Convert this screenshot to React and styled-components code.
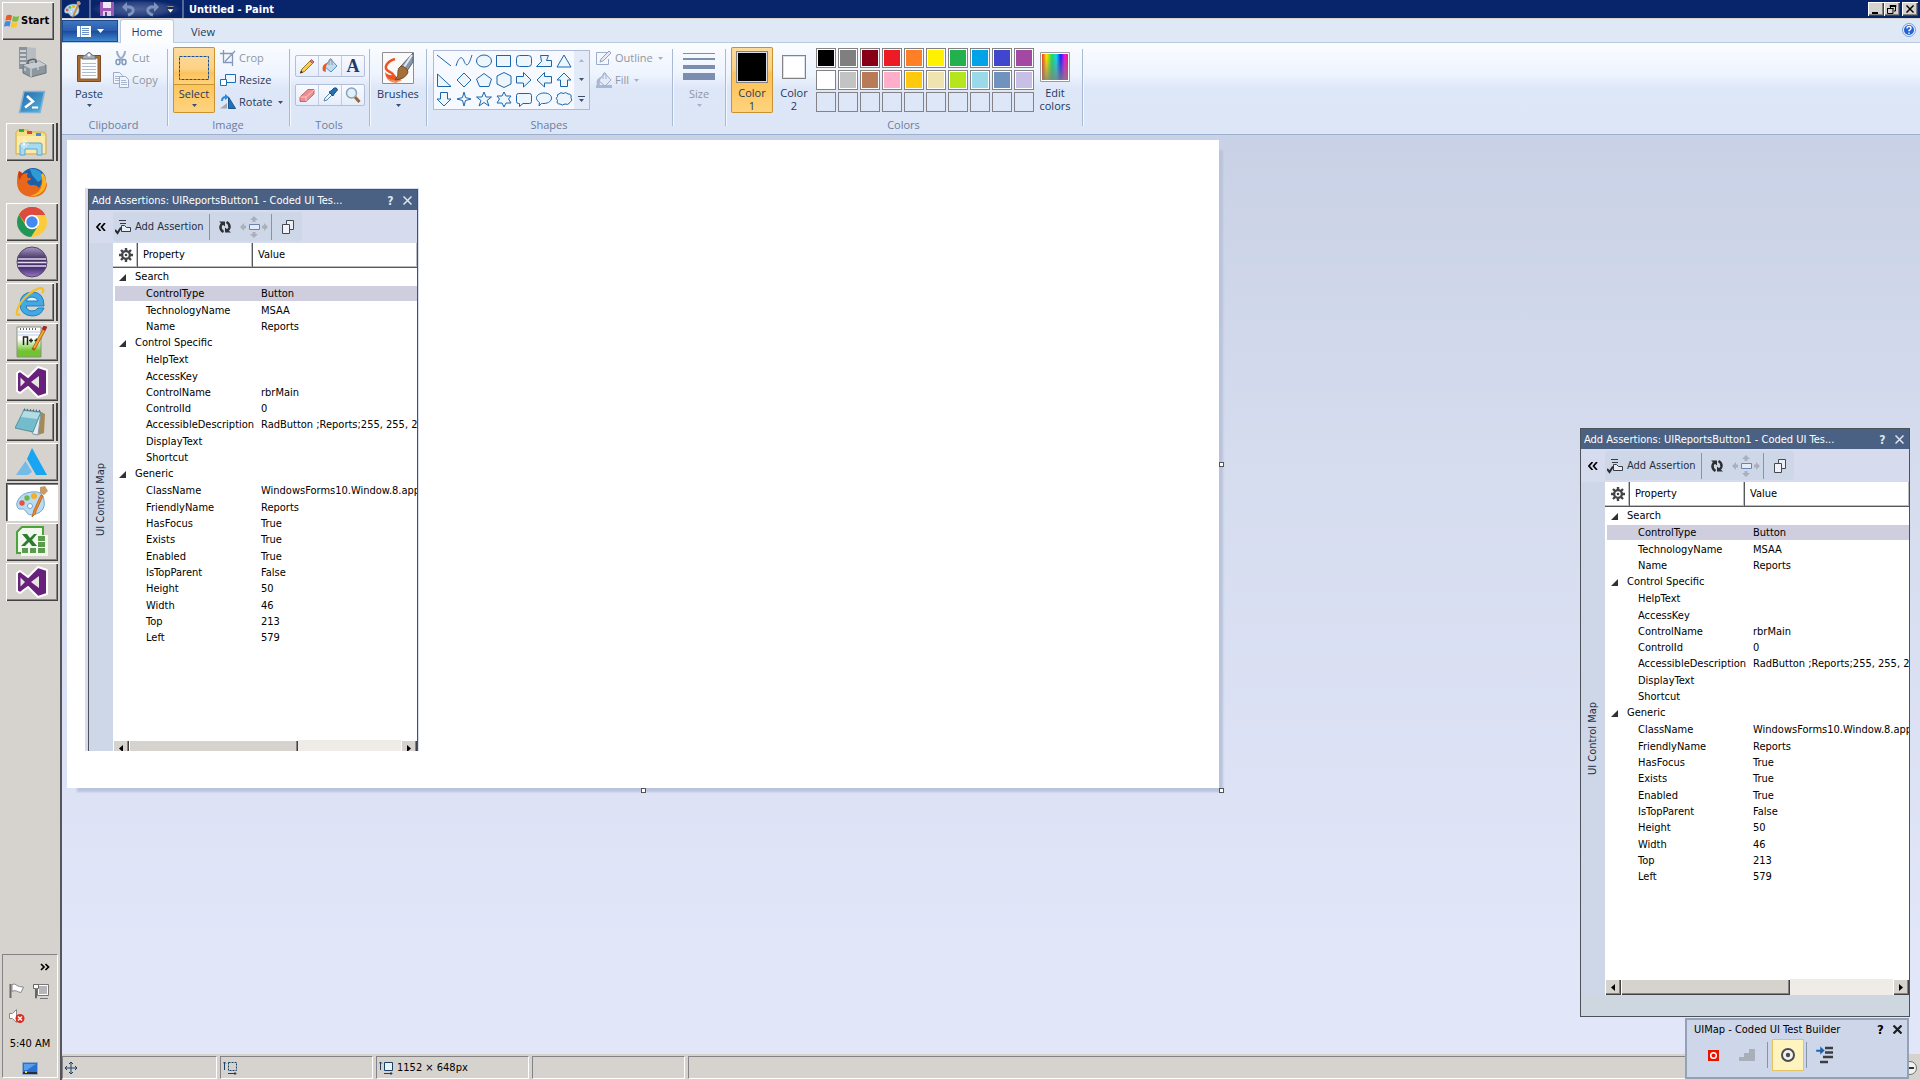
import React from "react";
import styled, { createGlobalStyle } from "styled-components";

const swatches = [
    "#000000", "#7f7f7f", "#880015", "#ed1c24", "#ff7f27", "#fff200", "#22b14c", "#00a2e8", "#3f48cc", "#a349a4",
    "#ffffff", "#c3c3c3", "#b97a57", "#ffaec9", "#ffc90e", "#efe4b0", "#b5e61d", "#99d9ea", "#7092be", "#c8bfe7",
    "", "", "", "", "", "", "", "", "", "",
];

const shapes = [
    ["Line", "M3 4L17 15"],
    ["Curve", "M2 15C5 5 8 5 10 10S14 17 18 4"],
    ["Oval", "M2.5 10a7.5 6 0 1 0 15 0a7.5 6 0 1 0 -15 0z"],
    ["Rectangle", "M2.5 4.5h14v11h-14z"],
    ["Rounded rectangle", "M5.500 4.500h9q3 0 3 3v5q0 3 -3 3h-9q-3 0 -3 -3v-5q0 -3 3 -3z"],
    ["Polygon", "M6.500 4.500h8l-2 5h5v6h-15l5 -5z"],
    ["Triangle", "M10 4L17 16H3z"],
    ["Right triangle", "M3.500 4L17 16.500H3.500z"],
    ["Diamond", "M10 3L17 10L10 17L3 10z"],
    ["Pentagon", "M10 3.500L17.500 9L15 16.500H5.500L2.500 9z"],
    ["Hexagon", "M10 2.500L17 6V14L10 17.500L3 14V6z"],
    ["Right arrow", "M2.500 6.500h7v-4L17 10L9.500 17v-4h-7z"],
    ["Left arrow", "M17.500 6.500h-7v-4L3 10L10.500 17v-4h7z"],
    ["Up arrow", "M10 3L17 10h-3.500v6.500h-7V10H3z"],
    ["Down arrow", "M6.500 3.500h7V10H17L10 17L3 10h3.500z"],
    ["Four-point star", "M10 3L11.500 8.500L17 10L11.500 11.500L10 17L8.500 11.500L3 10L8.500 8.500z"],
    ["Five-point star", "M10 3L12 8H17.500L13 11.500L15 17L10 13.500L5 17L7 11.500L2.500 8H8z"],
    ["Six-point star", "M10 3L12 7H17L14.500 10L17 14H12L10 18L8 14H3L5.500 10L3 7H8z"],
    ["Rounded callout", "M4.500 4.500h11q2 0 2 2v6q0 2 -2 2H9L5.500 17.500V14.500H4.500q-2 0 -2 -2v-6q0 -2 2 -2z"],
    ["Oval callout", "M5 17L5.500 13.500C-1 9 4 4 10 4C20 4 20 14 10 14.500Q8 14.500 7.500 14.500z"],
    ["Cloud callout", "M5 5Q7 2.500 9 4.500Q12 2.500 14 5Q18 5 17 8.500Q19 11.500 16 13.500Q14 16.500 11 15Q8 17 6 15Q2 15 3.500 11.500Q1 9 3.500 7.500Q3 5 5 5z"],
];

const properties = [
    { group: "Search", tall: true },
    { name: "ControlType", value: "Button", tall: true, selected: true },
    { name: "TechnologyName", value: "MSAA" },
    { name: "Name", value: "Reports" },
    { group: "Control Specific", tall: true },
    { name: "HelpText", tall: true },
    { name: "AccessKey" },
    { name: "ControlName", value: "rbrMain" },
    { name: "ControlId", value: "0" },
    { name: "AccessibleDescription", value: "RadButton ;Reports;255, 255, 2", tall: true },
    { name: "DisplayText" },
    { name: "Shortcut" },
    { group: "Generic", tall: true },
    { name: "ClassName", value: "WindowsForms10.Window.8.app", tall: true },
    { name: "FriendlyName", value: "Reports" },
    { name: "HasFocus", value: "True" },
    { name: "Exists", value: "True", tall: true },
    { name: "Enabled", value: "True" },
    { name: "IsTopParent", value: "False" },
    { name: "Height", value: "50", tall: true },
    { name: "Width", value: "46" },
    { name: "Top", value: "213" },
    { name: "Left", value: "579" },
];

/* ---------- drawings ---------- */

const Svg = ({ size = 16, w, h, box, children }) => (
    <svg width={w || size} height={h || size} viewBox={box || `0 0 ${w || size} ${h || size}`} fill="none" aria-hidden="true">
        {children}
    </svg>
);

const Caret = ({ color = "#3b4f6e" }) => (
    <Svg w={5} h={3}><path d="M0 0H5L2.500 3z" fill={color} /></Svg>
);

const WindowsLogo = () => (
    <Svg size={16}>
        <path d="M2.500 2.500Q5 1 8 2.500L7 7.500Q4 6.500 1.300 7.800z" fill="#e8592b" />
        <path d="M9 3Q12 4.500 15.300 3L14 8Q11 9.500 8 8z" fill="#7dbb42" />
        <path d="M1 8.800Q4 7.500 6.700 8.600L5.500 13.500Q3 12.300 0 13.800z" fill="#3b8ee0" />
        <path d="M7.700 9Q10.500 10.500 13.700 9L12.500 14Q9.500 15.600 6.500 14z" fill="#fbc62e" />
    </Svg>
);

const ServerIcon = () => (
    <Svg size={32}>
        <path d="M3 1h8v22H3z" fill="#8b9299" />
        <path d="M11 1l9 1v22h-9z" fill="#b7bdc2" />
        <path d="M4 5h6M4 9h6M4 13h6M4 17h6" stroke="#dfe5e8" strokeWidth="1.500" />
        <path d="M7 19L23 15L30 19V27L15 31L7 27z" fill="#8c979e" stroke="#69737a" />
        <path d="M7 19L23 15L30 19L15 23z" fill="#c6ced3" />
        <path d="M12 18v-3q5 -3 8 -1v3" stroke="#596269" strokeWidth="1.500" />
        <path d="M15 23v8M9 22v3M22 21v3" stroke="#e3e8eb" />
    </Svg>
);

const PowerShellIcon = () => (
    <Svg size={32}>
        <defs><linearGradient id="ps" x1="0" y1="0" x2="1" y2="1"><stop stopColor="#2567a9" /><stop offset="1" stopColor="#57b4dc" /></linearGradient></defs>
        <path d="M8 5.500H28.500L24 26.500H3.500z" fill="url(#ps)" stroke="#7fb4da" strokeWidth="1.500" strokeLinejoin="round" />
        <path d="M11 10L17 15.500L9 21.500" stroke="#fff" strokeWidth="2.500" />
        <path d="M16 21.500h6" stroke="#fff" strokeWidth="2" />
    </Svg>
);

const FolderIcon = () => (
    <Svg size={32}>
        <path d="M1 6L3 4h10l2 2h14l2 3v19H1z" fill="#f7dc83" stroke="#d2ae4c" />
        <path d="M4 3h5v3H4z" fill="#28b53c" /><path d="M12 5h5v3h-5z" fill="#d64a35" /><path d="M21 7h5v3h-5z" fill="#3d92d6" />
        <path d="M2 10h28v17H2z" fill="#fbeaa8" />
        <path d="M5 29V19q0 -2 2 -2h18q2 0 2 2v10h-5v-6H10v6z" fill="#a6daf0" stroke="#5ca6cc" />
        <path d="M9 13v10M4 18h10M6 15l6 6M12 15l-6 6" stroke="#fff" opacity=".7" />
    </Svg>
);

const FirefoxIcon = () => (
    <Svg size={32}>
        <circle cx="17" cy="15" r="13" fill="#1c5fa8" />
        <path d="M14 3Q25 2 28 12L22 16L16 9z" fill="#2f9bd4" />
        <path d="M3 5L7 8Q9 7 12 7Q10 10 12 12L15 12L14 14L11 15Q12 20 17 19Q21 19 23 22Q27 17 25 11Q31 15 31 19Q29 31 16 31Q2 30 1 17Q1 9 3 5z" fill="#e8671b" />
        <path d="M27 7Q33 16 28 24Q22 31 14 30Q25 27 26 18Q27 13 25 9z" fill="#f8b323" />
        <path d="M3 5Q1 11 4 14Q5 9 8 8z" fill="#c23b15" />
    </Svg>
);

const ChromeIcon = () => (
    <Svg size={32}>
        <circle cx="16" cy="16" r="15" fill="#fccb3c" />
        <path d="M3 8.500A15 15 0 0 1 29 8.500H16z" fill="#dd4b3e" />
        <path d="M3 8.500A15 15 0 0 0 15 31L22 20L10 20z" fill="#219657" />
        <path d="M3 8.500Q8 1 16 1Q25 1 29 9H16Q10 10 9 17z" fill="#dd4b3e" />
        <circle cx="16" cy="16" r="7.300" fill="#fff" />
        <circle cx="16" cy="16" r="5.700" fill="#4688f1" />
    </Svg>
);

const EclipseIcon = () => (
    <Svg size={32}>
        <defs><linearGradient id="ecl" x1="0" y1="0" x2="0" y2="1"><stop stopColor="#a89bc6" /><stop offset=".4" stopColor="#443060" /><stop offset=".7" stopColor="#4a3175" /><stop offset="1" stopColor="#9a77c6" /></linearGradient></defs>
        <circle cx="16" cy="16" r="15" fill="url(#ecl)" stroke="#574573" />
        <path d="M2 13h28M1.500 16.500h29M2 20h28" stroke="#e4dcf0" strokeWidth="1.500" />
    </Svg>
);

const IeIcon = () => (
    <Svg size={32}>
        <path d="M29 20H11q1 5 6 5q4 0 6 -3h6Q26 30 17 30Q5 29 5 18Q5 7 17 6Q29 6 29 20z" fill="#42a9e2" stroke="#1e7fbe" />
        <path d="M11 15h12q-1 -4 -6 -4t-6 4z" fill="#e1f1fa" stroke="#1e7fbe" />
        <path d="M5 28Q1 31 2 25Q4 16 14 8Q25 0 28 3Q29 5 27 7" stroke="#f5bd27" strokeWidth="2.200" />
    </Svg>
);

const NotepadPlusIcon = () => (
    <Svg size={32}>
        <defs><linearGradient id="npp" x1="0" y1="0" x2="0" y2="1"><stop offset=".4" stopColor="#fff" /><stop offset=".8" stopColor="#6fc530" /></linearGradient></defs>
        <path d="M1 1h24v30H1z" fill="url(#npp)" stroke="#8a8f7f" />
        <path d="M4 3h18" stroke="#666" strokeDasharray="1 2" strokeWidth="2" /><path d="M2 6h22M2 9h22" stroke="#b7cde4" />
        <path d="M7.500 19v-8h4v8M13 14.500h4M15 12.500v4M18.500 14.500h4M20.500 12.500v4" stroke="#1b2716" strokeWidth="1.500" />
        <path d="M28 4L17 24" stroke="#a25b12" strokeWidth="3.500" /><path d="M28 4L18 22" stroke="#f2a82c" strokeWidth="2" />
        <path d="M29.500 0L27.500 4" stroke="#a02a2a" strokeWidth="4" />
    </Svg>
);

const VisualStudioIcon = () => (
    <Svg size={32}>
        <path d="M22 1L31 4V28L22 31L12 21L4 27L1 25V7L4 5L12 11z" fill="#68217a" stroke="#fff" strokeWidth="2" strokeLinejoin="round" />
        <path d="M23 10V22L15 16zM4.500 11.500V20.500L9 16z" fill="#e8e6e3" />
    </Svg>
);

const NotepadIcon = () => (
    <Svg size={32}>
        <path d="M26 6L30 8L29 27L23 29z" fill="#a78857" />
        <path d="M8 4L26 6L23 29L18 28z" fill="#e2edf1" stroke="#8098a4" />
        <path d="M9 4L26 6L18 26L0 22z" fill="#73bccb" stroke="#568f9e" />
        <path d="M9 5L25 7L22 13L6 11z" fill="#b5dce3" />
        <path d="M9 3.500L26 5" stroke="#56666d" strokeWidth="2" strokeDasharray="1 2" />
    </Svg>
);

const AzureIcon = () => (
    <Svg size={32}>
        <path d="M16 2L31 29H20L11 13z" fill="#1aa5f2" />
        <path d="M9.500 15L16 26L12 29H0z" fill="#75bbe8" />
    </Svg>
);

const PaletteIcon = ({ size = 32 }) => (
    <Svg size={size} box="0 0 32 32">
        <path d="M15 6Q27 4 28 14Q30 25 20 28Q12 31 10 25Q8 22 3 23Q-1 20 2 14Q6 7 15 6z" fill="#b9dcf2" stroke="#6fa7cf" />
        <circle cx="14" cy="20" r="2.500" fill="#fff" stroke="#6fa7cf" />
        <circle cx="6" cy="17" r="2.700" fill="#e25349" /><circle cx="11" cy="12" r="2.700" fill="#6bb84a" /><circle cx="18" cy="10" r="3" fill="#f5ac2b" />
        <path d="M25 9L18 24L16 31Q21 27 20 25L27 10z" fill="#e48b34" stroke="#c76c25" />
        <path d="M24 1L29 0L32 5L28 9L24 7z" fill="#c89b6b" />
    </Svg>
);

const ExcelIcon = () => (
    <Svg size={32}>
        <path d="M6 1H27V27H1V6z" fill="#f3f8ef" stroke="#49a43a" strokeWidth="2" />
        <path d="M21 9h11v21H5v-9h16z" fill="#f3f8ef" />
        <path d="M22 10h7v5h-7zM22 16h7v5h-7zM6 22h6v5H6zM14 22h6v5h-6zM22 22h7v5h-7z" fill="#5a9b4c" />
        <path d="M6 8h5l3 4l4 -4h3l-5 6l5 6h-5l-3 -4l-4 4H5l6 -6z" fill="#2c7b2f" />
    </Svg>
);

const FlagIcon = () => (
    <Svg size={16}><path d="M1.500 1v14" stroke="#6b6b6b" strokeWidth="2" /><path d="M3 1.500Q6 0 8 2.500Q10 4 14.500 4L12 9.500Q9 9 7.500 8Q5 7 3 8.500z" fill="#fff" stroke="#8a8a8a" /></Svg>
);

const NetworkIcon = () => (
    <Svg size={16}><path d="M5 2h10v10H5z" fill="#b7b5b8" /><path d="M5.500 2.500h9v9h-9z" stroke="#fff" /><path d="M4.500 1.500h11v11h-11zM7 15.500h8" stroke="#777" /><path d="M.5 1.500h5v4h-2v9.500h-1V5.500h-2z" fill="#fff" stroke="#666" /></Svg>
);

const SpeakerIcon = () => (
    <Svg size={16}><path d="M.5 5.500h3l4 -4v13l-4 -4h-3z" fill="#fff" stroke="#888" /><circle cx="11" cy="10.500" r="4.500" fill="#db2c1d" /><path d="M9 8.500l4 4M13 8.500l-4 4" stroke="#fff" strokeWidth="1.500" /></Svg>
);

const DesktopIcon = () => (
    <Svg w={16} h={13}><path d="M.5 .5h15v12H.5z" fill="#2a70cf" stroke="#8ba8c8" /><path d="M2 2h12L5 8H2z" fill="#5c9cec" /><path d="M1 10h14v2H1z" fill="#262b35" /><path d="M3 9h2v2H3z" fill="#f8ca3a" /></Svg>
);

const SaveIcon = () => (
    <Svg size={14}><path d="M0 0h14v14H0z" fill="#9b5ab5" /><path d="M3 0h8v6H3z" fill="#f1eaf4" /><path d="M3 9h8v5H3z" fill="#ddd0e5" /><path d="M5 10h2v4H5z" fill="#6d3b87" /></Svg>
);

const UndoIcon = ({ flip }) => (
    <Svg size={16}><g transform={flip ? "translate(16 0) scale(-1 1)" : undefined}><path d="M4 6H9Q13 7 12 10.500Q11 13 7 14" stroke="#7e94bf" strokeWidth="3" /><path d="M1 6L6 1V11z" fill="#7e94bf" /></g></Svg>
);

const PasteIcon = () => (
    <Svg w={26} h={31}>
        <path d="M1.500 3.500h23v26h-23z" fill="#ad6b2e" stroke="#7e4a1e" strokeLinejoin="round" />
        <path d="M4 6h18v21H4z" fill="#fbfdff" stroke="#8b5a31" />
        <path d="M6 11.500h14M6 14.500h14M6 17.500h14M6 20.500h14M6 23.500h14" stroke="#aebbd0" />
        <path d="M6 7q0 -4 4 -4q3 -5 6 0q4 0 4 4z" fill="#a4adb8" stroke="#69717c" /><circle cx="13" cy="3" r="1.500" fill="#fff" />
    </Svg>
);

const CutIcon = () => (
    <Svg><path d="M4 1Q4 6 9.500 10M12 1Q12 6 6.500 10" stroke="#9baecb" strokeWidth="2" /><ellipse cx="5" cy="12" rx="2" ry="2.600" stroke="#8197bb" strokeWidth="1.500" /><ellipse cx="11" cy="12" rx="2" ry="2.600" stroke="#8197bb" strokeWidth="1.500" /></Svg>
);

const CopyIcon = () => (
    <Svg><path d="M.5 .5h6l3 3v8h-9z" fill="#f0f4fc" stroke="#9bacc9" /><path d="M2 4.500h5M2 6.500h5M2 8.500h5" stroke="#a8b8d2" /><path d="M6.500 4.500h6l3 3v8h-9z" fill="#f0f4fc" stroke="#9bacc9" /><path d="M8 8.500h5M8 10.500h6M8 12.500h6" stroke="#a8b8d2" /></Svg>
);

const SelectIcon = () => (
    <Svg size={32}><path d="M1.500 4.500h29v23h-29z" stroke="#12509c" strokeDasharray="3 1" /></Svg>
);

const CropIcon = () => (
    <Svg><path d="M3.500 0v12.500H12M0 3.500h12.500V16M5 11.500L15 1" stroke="#8597b8" strokeWidth="1.300" /></Svg>
);

const ResizeIcon = () => (
    <Svg><path d="M5.500 2.500h10v8h-10z" fill="#eef6ff" stroke="#1f6db3" /><path d="M.5 7.500h6v6h-6z" fill="#fff" stroke="#1f6db3" /></Svg>
);

const RotateIcon = () => (
    <Svg><path d="M8.500 3L15.500 14.500H8.500z" fill="#2471b5" stroke="#17568f" /><path d="M7 9v5.500H0z" fill="#a3a8b3" /><path d="M2 7Q2 3 6 3" stroke="#2f8add" strokeWidth="2" /><path d="M5 0l4 3l-4 3z" fill="#2f8add" /></Svg>
);

const PencilIcon = () => (
    <Svg><path d="M1.500 15L3 11L11 3L13.500 5.500L5.500 13.500z" fill="#f6cd4c" stroke="#9b7431" /><path d="M11 3L12.500 1.500L15 4L13.500 5.500z" fill="#e27d86" stroke="#9b5a5e" /><path d="M1 15.500L2 12.500L4 14.500z" fill="#333" /></Svg>
);

const BucketIcon = ({ muted }) => (
    <Svg>
        {muted && <path d="M0 13h16v3H0z" fill="#a9b8d2" />}
        <path d="M3 7L9 1.500L15 8L9 14L3 9z" fill={muted ? "#e6ecf7" : "#bedcf1"} stroke={muted ? "#9badca" : "#5b90bc"} />
        <path d="M7 7V2q2 -3 3 0v5" stroke={muted ? "#9badca" : "#868f99"} />
        <path d="M1 13Q-1 6 6 5Q3 8 4 14z" fill={muted ? "#a9b8d2" : "#ea5a25"} />
    </Svg>
);

const EraserIcon = () => (
    <Svg><path d="M1 10L9 2.500H15L15 7L7 14.500H1z" fill="#ec8f92" stroke="#c56469" /><path d="M1 10H7L15 3" stroke="#fac7c8" /><path d="M7 10v4" stroke="#fac7c8" /></Svg>
);

const PickerIcon = () => (
    <Svg><path d="M2 14L3 11L8 6L10 8L5 13z" fill="#eef6fd" stroke="#5b84ad" /><path d="M7 5L9 4L12 1Q15 0 15.500 3L12 7L11 9z" fill="#2470b5" stroke="#174f86" /></Svg>
);

const LensIcon = () => (
    <Svg><path d="M10 10L14.500 15" stroke="#99643a" strokeWidth="3" /><circle cx="6.500" cy="6" r="5" fill="#dff1fc" stroke="#8aa0b6" strokeWidth="1.500" /></Svg>
);

const BrushIcon = () => (
    <Svg size={32}>
        <path d="M.5 .5h31v31H.5z" fill="#fafafa" stroke="#8f8f8f" />
        <path d="M13 7Q6 9 4 14Q3 18 8 20Q12 22 13 27" stroke="#ee5422" strokeWidth="2.500" />
        <path d="M3 20Q6 24 13 23Q15 27 20 28Q10 32 6 27Q3 24 3 20z" fill="#ee5422" />
        <path d="M4 25Q9 29 20 28L14 31Q6 30 4 25z" fill="#f88b5c" />
        <path d="M31 1V10L25 19L19 14z" fill="#8998ad" stroke="#5a6778" /><path d="M30 3L22 15" stroke="#e6edf5" strokeWidth="2" />
        <path d="M19 14Q25 15 26 20Q24 27 13 28Q17 24 16 19Q16 16 19 14z" fill="#a36f3a" stroke="#754921" />
    </Svg>
);

const OutlineIcon = () => (
    <Svg><path d="M12 2.500H.5v12h12V9" stroke="#9badca" /><path d="M4 12L5 9L13 1L15 3L7 11z" fill="#e5ebf6" stroke="#8ea2c3" /></Svg>
);

const SizeIcon = () => (
    <Svg size={32}><path d="M0 1h32v1H0zM0 6h32v2H0zM0 13h32v4H0zM0 21h32v7H0z" fill="#7c8eb0" /></Svg>
);

const SpectrumIcon = () => (
    <Svg w={30} h={30}>
        <defs>
            <linearGradient id="hue"><stop stopColor="#f23a1e" /><stop offset=".17" stopColor="#fbe500" /><stop offset=".38" stopColor="#1ed760" /><stop offset=".55" stopColor="#15d5e8" /><stop offset=".72" stopColor="#1b22f2" /><stop offset=".87" stopColor="#e518e5" /><stop offset="1" stopColor="#f01b5d" /></linearGradient>
            <linearGradient id="fade" x1="0" y1="0" x2="0" y2="1"><stop offset=".1" stopColor="#808080" stopOpacity="0" /><stop offset="1" stopColor="#808080" stopOpacity=".8" /></linearGradient>
        </defs>
        <path d="M.5 .5h29v29h-29z" fill="#fff" stroke="#9b9b9b" /><path d="M2 2h26v26h-26z" fill="url(#hue)" /><path d="M2 2h26v26h-26z" fill="url(#fade)" />
    </Svg>
);

const HelpIcon = () => (
    <Svg size={14}><circle cx="7" cy="7" r="6.500" fill="#e8f1fd" stroke="#7a9fe0" /><circle cx="7" cy="7" r="5" fill="#2460d8" /><path d="M5 5.500Q5 3.500 7 3.500T9 5.200Q9 6.500 7 7.500V8.300M7 9.500V11" stroke="#fff" strokeWidth="1.400" /></Svg>
);

const AssertIcon = () => (
    <Svg><path d="M4 1.500h7M5 4.500h6M7 7.500h3" stroke="#3a3d40" /><path d="M6.500 6.500h3l2 2h4v4h-9z" fill="#e8ecf4" stroke="#3a3d40" /><path d="M0 11l2.500 3L6 8.500" stroke="#2b2d30" strokeWidth="2" /></Svg>
);

const RefreshIcon = () => (
    <Svg size={14}><path d="M5.500 12Q2 10 2.500 6.500Q3 4 5.500 3M8.500 2Q12 4 11.500 7.500Q11 10 8.500 11" stroke="#2c2f33" strokeWidth="2.500" /><path d="M1 1.500h6v5zM13 12.500H7v-5z" fill="#2c2f33" /></Svg>
);

const NavigateIcon = () => (
    <Svg w={30} h={24}><path d="M15 1L19 5H16.500V7H13.500V5H11zM15 23L11 19H13.500V17H16.500V19H19zM1 12L5 8V10.500H7V13.500H5V16zM29 12L25 16V13.500H23V10.500H25V8z" fill="#aab0bb" /><path d="M10.500 9.500h10v5h-10z" fill="#e4ebf5" stroke="#6a83b3" /></Svg>
);

const PagesIcon = () => (
    <Svg w={14} h={16}><path d="M5.500 1.500h7v9h-7z" fill="#eaeef5" stroke="#46494e" /><path d="M1.500 5.500h7v9h-7z" fill="#f1f2f8" stroke="#46494e" /></Svg>
);

const GearIcon = () => (
    <Svg size={14}><path d="M7 0v14M0 7h14M2 2l10 10M12 2L2 12" stroke="#424447" strokeWidth="2.400" /><circle cx="7" cy="7" r="5" fill="#424447" /><circle cx="7" cy="7" r="2.700" fill="#fff" /><circle cx="7" cy="7" r="1.300" fill="#424447" /></Svg>
);

const Chevrons = ({ right }) => (
    <Svg w={10} h={8}><path d={right ? "M1 1l3 3l-3 3M5.500 1l3 3l-3 3" : "M4.500 0L1 4l3.500 4M9 0L5.500 4L9 8"} stroke="#000" strokeWidth="1.700" /></Svg>
);

const CrossIcon = ({ color, thick = 1.5, size = 9 }) => (
    <Svg size={size} box="0 0 9 9"><path d="M.5 .5l8 8M8.500 .5l-8 8" stroke={color} strokeWidth={thick} /></Svg>
);

/* ---------- property inspector ---------- */

const AssertionWindow = () => (
    <Inspector>
        <InspectorTitle>
            <span>Add Assertions: UIReportsButton1 - Coded UI Tes...</span>
            <TitleButton aria-label="Help">?</TitleButton>
            <TitleButton aria-label="Close"><CrossIcon color="#dfe5ee" /></TitleButton>
        </InspectorTitle>
        <InspectorBar>
            <Collapse aria-label="Collapse"><Chevrons /></Collapse>
            <ToolStrip>
                <ToolButton $width={93}><AssertIcon />Add Assertion</ToolButton>
                <ToolDivider $gap={1} />
                <ToolButton $width={27} aria-label="Refresh"><RefreshIcon /></ToolButton>
                <ToolButton $width={32} aria-label="Navigate"><NavigateIcon /></ToolButton>
                <ToolDivider $gap={1} />
                <ToolButton $width={29} aria-label="Copy"><PagesIcon /></ToolButton>
            </ToolStrip>
        </InspectorBar>
        <InspectorBody>
            <SideTab>UI Control Map</SideTab>
            <Sheet>
                <SheetScroll>
                    <PropertyTable>
                        <colgroup><col width="25" /><col width="115" /><col /></colgroup>
                        <thead>
                            <tr>
                                <HeadCell aria-label="Options"><GearIcon /></HeadCell>
                                <HeadCell>Property</HeadCell>
                                <HeadCell>Value</HeadCell>
                            </tr>
                        </thead>
                        <tbody>
                            {properties.map(row => row.group ? (
                                <PropertyRow key={row.group} $tall={row.tall}>
                                    <Cell colSpan={3}>
                                        <GroupLabel><Svg size={7}><path d="M7 0V7H0z" fill="#2f3133" /></Svg>{row.group}</GroupLabel>
                                    </Cell>
                                </PropertyRow>
                            ) : (
                                <PropertyRow key={row.name} $tall={row.tall}>
                                    <NameCell colSpan={2} $selected={row.selected}>{row.name}</NameCell>
                                    <ValueCell $selected={row.selected}>{row.value}</ValueCell>
                                </PropertyRow>
                            ))}
                        </tbody>
                    </PropertyTable>
                </SheetScroll>
                <ScrollTrack>
                    <ScrollButton aria-label="Scroll left"><Svg w={4} h={7}><path d="M4 0V7L0 3.500z" fill="#000" /></Svg></ScrollButton>
                    <ScrollThumb />
                    <ScrollButton aria-label="Scroll right"><Svg w={4} h={7}><path d="M0 0V7L4 3.500z" fill="#000" /></Svg></ScrollButton>
                </ScrollTrack>
            </Sheet>
        </InspectorBody>
        <InspectorFoot />
    </Inspector>
);

/* ---------- ribbon ---------- */

const RibbonGroup = ({ label, width, children }) => (
    <Group $width={width}>
        <GroupItems>{children}</GroupItems>
        <GroupTitle>{label}</GroupTitle>
    </Group>
);

const Ribbon = () => (
    <RibbonBar>
        <RibbonGroup label="Clipboard" width={107}>
            <BigButton $width={46}><IconBox><PasteIcon /></IconBox>Paste<Drop><Caret /></Drop></BigButton>
            <SmallStack $gap={1}>
                <SmallButton disabled><CutIcon />Cut</SmallButton>
                <SmallButton disabled><CopyIcon />Copy</SmallButton>
            </SmallStack>
        </RibbonGroup>
        <RibbonGroup label="Image" width={122}>
            <BigButton $width={42} $active $split><IconBox><SelectIcon /></IconBox>Select<Drop><Caret /></Drop></BigButton>
            <SmallStack $gap={5}>
                <SmallButton disabled><CropIcon />Crop</SmallButton>
                <SmallButton><ResizeIcon />Resize</SmallButton>
                <SmallButton><RotateIcon />Rotate<Caret /></SmallButton>
            </SmallStack>
        </RibbonGroup>
        <RibbonGroup label="Tools" width={80}>
            <ToolPads>
                <ToolPad>
                    <PadButton aria-label="Pencil"><PencilIcon /></PadButton>
                    <PadButton aria-label="Fill with color"><BucketIcon /></PadButton>
                    <PadButton aria-label="Text"><Letter>A</Letter></PadButton>
                </ToolPad>
                <ToolPad>
                    <PadButton aria-label="Eraser"><EraserIcon /></PadButton>
                    <PadButton aria-label="Color picker"><PickerIcon /></PadButton>
                    <PadButton aria-label="Magnifier"><LensIcon /></PadButton>
                </ToolPad>
            </ToolPads>
        </RibbonGroup>
        <RibbonGroup width={57}>
            <BigButton $width={46}><IconBox><BrushIcon /></IconBox>Brushes<Drop><Caret /></Drop></BigButton>
        </RibbonGroup>
        <RibbonGroup label="Shapes" width={246}>
            <Gallery>
                <ShapeGrid>
                    {shapes.map(([name, d]) => (
                        <ShapeButton key={name} aria-label={name}>
                            <Svg size={20}><path d={d} fill={name === "Line" || name === "Curve" ? "none" : "#eef6fd"} stroke="#1b66ab" /></Svg>
                        </ShapeButton>
                    ))}
                </ShapeGrid>
                <GalleryScroll>
                    <GalleryButton aria-label="Previous"><Svg w={5} h={3}><path d="M0 3H5L2.500 0z" fill="#a9b3ca" /></Svg></GalleryButton>
                    <GalleryButton aria-label="Next"><Caret /></GalleryButton>
                    <GalleryButton aria-label="More"><Svg w={7} h={6}><path d="M0 0h7v1H0zM1 3h5L3.500 6z" fill="#3b4f6e" /></Svg></GalleryButton>
                </GalleryScroll>
            </Gallery>
            <SmallStack $gap={6}>
                <SmallButton disabled><OutlineIcon />Outline<Caret color="#a4b3cc" /></SmallButton>
                <SmallButton disabled><BucketIcon muted />Fill<Caret color="#a4b3cc" /></SmallButton>
            </SmallStack>
        </RibbonGroup>
        <RibbonGroup width={53}>
            <BigButton $width={42} disabled><IconBox><SizeIcon /></IconBox>Size<Drop><Caret color="#a4b3cc" /></Drop></BigButton>
        </RibbonGroup>
        <RibbonGroup label="Colors" width={357}>
            <BigButton $width={42} $active><IconBox><ColorChip $size={32} $color="#000" /></IconBox>Color<br />1</BigButton>
            <BigButton $width={42}><IconBox><ColorChip $size={24} $color="#fff" /></IconBox>Color<br />2</BigButton>
            <SwatchGrid>
                {swatches.map((color, i) => <Swatch key={i} $color={color} aria-label={"Swatch " + (i + 1)} />)}
            </SwatchGrid>
            <BigButton $width={42}><IconBox><SpectrumIcon /></IconBox>Edit<br />colors</BigButton>
        </RibbonGroup>
    </RibbonBar>
);

/* ---------- taskbar ---------- */

const tasks = [
    ["Server Manager", ServerIcon, "flat"],
    ["PowerShell", PowerShellIcon, "flat"],
    ["Explorer", FolderIcon, "stacked"],
    ["Firefox", FirefoxIcon, "flat"],
    ["Chrome", ChromeIcon, "raised"],
    ["Eclipse", EclipseIcon, "raised"],
    ["Internet Explorer", IeIcon, "stacked"],
    ["Notepad++", NotepadPlusIcon, "raised"],
    ["Visual Studio", VisualStudioIcon, "raised"],
    ["Notepad", NotepadIcon, "stacked"],
    ["Azure", AzureIcon, "raised"],
    ["Paint", PaletteIcon, "pressed"],
    ["Excel", ExcelIcon, "raised"],
    ["Visual Studio 2", VisualStudioIcon, "raised"],
];

const Taskbar = () => (
    <Bar>
        <StartButton><WindowsLogo />Start</StartButton>
        <TaskList>
            {tasks.map(([name, Icon, look]) => (
                <TaskButton key={name} aria-label={name} $look={look}><Icon /></TaskButton>
            ))}
        </TaskList>
        <Tray>
            <TrayTop><Chevrons right /></TrayTop>
            <TrayIcons><FlagIcon /><NetworkIcon /><SpeakerIcon /></TrayIcons>
            <Clock>5:40 AM</Clock>
            <DesktopIcon />
        </Tray>
    </Bar>
);

const App = () => (
    <Screen>
        <Global />
        <Taskbar />
        <Main>
            <TitleBar>
                <PaletteIcon size={17} />
                <QuickAccess>
                    <SaveIcon /><UndoIcon /><UndoIcon flip />
                    <Svg w={7} h={7}><path d="M0 0h7v1H0zM0 3h7L3.500 7z" fill="#fff" stroke="#000" strokeWidth=".5" /></Svg>
                </QuickAccess>
                <Caption>Untitled - Paint</Caption>
                <WindowButton aria-label="Minimize"><Svg w={10} h={9}><path d="M1 7h6v2H1z" fill="#000" /></Svg></WindowButton>
                <WindowButton aria-label="Restore"><Svg w={10} h={9}><path d="M3 .5h6v1H3zM3.500 1v2M8.500 1v5H7M0 3.500h6.500M.5 3v5.500h5.500V3" stroke="#000" /></Svg></WindowButton>
                <WindowButton aria-label="Close" $last><CrossIcon color="#000" thick={1.6} size={8} /></WindowButton>
            </TitleBar>
            <Tabs>
                <FileButton aria-label="Paint menu">
                    <Svg w={14} h={11}><path d="M0 0h14v11H0z" fill="#fff" /><path d="M5 2.500h7M5 4.500h7M5 6.500h7M5 8.500h7M3.500 0v11" stroke="#6f93c6" /></Svg>
                    <Svg w={7} h={4}><path d="M0 0h7L3.500 4z" fill="#fff" /></Svg>
                </FileButton>
                <Tab href="#home" $active>Home</Tab>
                <Tab href="#view">View</Tab>
                <HelpButton aria-label="Help"><HelpIcon /></HelpButton>
            </Tabs>
            <Ribbon />
            <Workspace>
                <Paper>
                    <Pasted><AssertionWindow /></Pasted>
                    <Handle $x="100%" $y="calc(50% - 2px)" />
                    <Handle $x="calc(50% - 2px)" $y="100%" />
                    <Handle $x="100%" $y="100%" />
                </Paper>
            </Workspace>
            <StatusBar>
                <StatusCell><Svg size={12}><path d="M6 0v12M0 6h12M4 2l2 -2l2 2M4 10l2 2l2 -2M2 4L0 6l2 2M10 4l2 2l-2 2" stroke="#1c4064" /></Svg></StatusCell>
                <StatusCell><Svg size={14}><path d="M5.500 1.500h8v8h-8z" stroke="#1c4064" strokeDasharray="2 1" /><path d="M1.500 1v8M0 2.500L1.500 1L3 2.500M5 12.500h8M11.500 11l1.500 1.500L11.500 14" stroke="#1c4064" /></Svg></StatusCell>
                <StatusCell><Svg size={14}><path d="M5.500 1.500h8v8h-8z" fill="#e8f4fc" stroke="#1c4064" /><path d="M1.500 1v8M0 2.500L1.500 1L3 2.500M5 12.500h8M11.500 11l1.500 1.500L11.500 14" stroke="#1c4064" /></Svg>1152 × 648px</StatusCell>
                <StatusCell />
                <StatusCell $wide />
                <ZoomCell><Svg size={14}><circle cx="7" cy="7" r="6.500" fill="#f2f2f0" stroke="#6e6e6e" /><path d="M3 7h8" stroke="#333" strokeWidth="2" /></Svg></ZoomCell>
            </StatusBar>
        </Main>
        <Floating><AssertionWindow /></Floating>
        <Builder>
            <BuilderTitle>
                <span>UIMap - Coded UI Test Builder</span>
                <BuilderButton aria-label="Help">?</BuilderButton>
                <BuilderButton aria-label="Close"><CrossIcon color="#1b1d20" thick={2.2} /></BuilderButton>
            </BuilderTitle>
            <BuilderTools>
                <BuilderTool aria-label="Record"><Svg size={11}><path d="M0 0h11v11H0z" fill="#e51400" /><circle cx="5.500" cy="5.500" r="2.800" stroke="#fff" strokeWidth="1.500" /></Svg></BuilderTool>
                <BuilderTool aria-label="Show steps"><Svg w={16} h={12}><path d="M0 12V8h5V4h5V0h6v12z" fill="#a9afb9" /></Svg></BuilderTool>
                <ToolDivider $gap={3} />
                <BuilderTool aria-label="Add assertions" $active><Svg size={14}><circle cx="7" cy="7" r="6" fill="#f2f1ef" stroke="#4b4d50" strokeWidth="2" /><circle cx="7" cy="7" r="2.200" fill="#4b4d50" /></Svg></BuilderTool>
                <ToolDivider $gap={1} />
                <BuilderTool aria-label="Generate code"><Svg w={18} h={18}><path d="M9 2h8M9 6.500h8M7 11h10M4 16h8" stroke="#3b3d40" strokeWidth="2.500" /><path d="M0 3.500h4V0l5 4.500L4 9V6H0z" fill="#1c62ab" stroke="#ced7e9" strokeWidth=".5" /></Svg></BuilderTool>
            </BuilderTools>
        </Builder>
    </Screen>
);

export default App;

const Global = createGlobalStyle`
* {
    box-sizing: border-box;
}

body {
    margin: 0;
    overflow: hidden;
    font: 11px/14px "DejaVu Sans Condensed", "DejaVu Sans", sans-serif;
    color: #000;
}

button {
    margin: 0;
    padding: 0;
    border: 0;
    background: none;
    font: inherit;
    color: inherit;
}

svg {
    display: block;
    flex: none;
}
`;

const Screen = styled.div`
position: relative;
display: flex;
height: 100vh;
`;

const Bar = styled.nav`
width: 62px;
flex: none;
display: flex;
flex-direction: column;
padding: 2px;
background: #d6d3ce;
border-right: 2px solid #55555b;
`;

const bevel = "inset 1px 1px #fff, inset -1px -1px #424142, inset -2px -2px #848284";

const StartButton = styled.button`
width: 52px;
height: 38px;
display: flex;
align-items: center;
gap: 1px;
padding-left: 2px;
font-weight: bold;
box-shadow: ${bevel};
`;

const TaskList = styled.div`
display: flex;
flex-direction: column;
align-items: flex-start;
gap: 2px;
padding: 3px 0 0 4px;
flex: 1;
`;

const TaskButton = styled.button`
width: ${props => props.$look === "stacked" ? 48 : 52}px;
height: 38px;
display: flex;
align-items: center;
justify-content: center;
padding-left: ${props => props.$look === "stacked" ? 2 : 0}px;
background: ${props => props.$look === "pressed" ? "#fff" : "none"};
box-shadow: ${props => ({
        flat: "none",
        raised: bevel,
        stacked: `${bevel}, 2px 0 #d6d3ce, 4px 0 #424142`,
        pressed: "inset 1px 1px #424142, inset 2px 2px #848284, inset -1px -1px #fff",
    })[props.$look]};
`;

const Tray = styled.div`
width: 56px;
height: 124px;
display: flex;
flex-direction: column;
align-items: center;
border: 1px solid;
border-color: #848284 #fff #fff #848284;
`;

const TrayTop = styled.div`
align-self: flex-end;
padding: 8px 7px 12px 0;
`;

const TrayIcons = styled.div`
display: grid;
grid-template-columns: 16px 16px;
gap: 9px 8px;
width: 100%;
padding-left: 6px;
`;

const Clock = styled.div`
padding: 13px 0 11px;
`;

const Main = styled.div`
flex: 1;
min-width: 0;
display: flex;
flex-direction: column;
`;

const TitleBar = styled.header`
height: 19px;
flex: none;
display: flex;
align-items: center;
padding: 0 2px;
background: #08246b;
border-bottom: 1px solid #d6d3ce;
`;

const QuickAccess = styled.div`
height: 18px;
display: flex;
align-items: center;
gap: 7px;
margin-left: 8px;
padding: 0 8px 0 9px;
border: solid #55699b;
border-width: 0 2px;
background: radial-gradient(closest-side, #4d629b, #2a427f 70%, #08246b);
`;

const Caption = styled.h1`
flex: 1;
margin: 0 0 0 5px;
padding-top: 2px;
font-size: 11px;
line-height: 16px;
color: #fff;
`;

const WindowButton = styled.button`
width: 16px;
height: 14px;
margin-left: ${props => props.$last ? 2 : 0}px;
display: flex;
align-items: center;
justify-content: center;
background: #d6d3ce;
box-shadow: ${bevel};
`;

const Tabs = styled.nav`
height: 24px;
flex: none;
display: flex;
align-items: flex-end;
gap: 2px;
background: #dfe9f5;
border-bottom: 1px solid #b9c9e1;
font-family: "Open Sans", sans-serif;
`;

const FileButton = styled.button`
width: 56px;
height: 22px;
display: flex;
align-items: center;
justify-content: center;
gap: 6px;
border: 1px solid #1c4a92;
background: linear-gradient(#3f76bf, #2a5cab 48%, #1a489a 50%, #3d87cf);
`;

const Tab = styled.a`
width: 54px;
height: ${props => props.$active ? 24 : 23}px;
margin-bottom: -1px;
border: 1px solid ${props => props.$active ? "#b9c9e1" : "transparent"};
border-bottom: 0;
border-radius: 3px 3px 0 0;
background: ${props => props.$active ? "#fcfdff" : "none"};
color: ${props => props.$active ? "#123f80" : "#1e395b"};
line-height: ${props => props.$active ? 23 : 21}px;
text-align: center;
text-decoration: none;
`;

const HelpButton = styled.button`
margin: 0 4px 5px auto;
`;

const RibbonBar = styled.section`
height: 92px;
flex: none;
display: flex;
padding-top: 4px;
background: linear-gradient(#fafcff, #eef4fe 35%, #e6edfb 42%, #dde7f8 50%, #dce6f7);
border-bottom: 1px solid #9cb0cf;
font-family: "Open Sans", sans-serif;
color: #1e395b;
`;

const Group = styled.div`
width: ${props => props.$width}px;
flex: none;
display: flex;
flex-direction: column;
padding: 0 0 2px 4px;
background: linear-gradient(90deg, #a9bad5 1px, #f3f7fe 1px) right 0 top 2px / 2px 77px no-repeat;
`;

const GroupItems = styled.div`
display: flex;
flex: 1;
`;

const GroupTitle = styled.div`
height: 15px;
margin-right: 8px;
line-height: 15px;
text-align: center;
color: #6d7da0;
`;

const BigButton = styled.button`
width: ${props => props.$width}px;
height: 66px;
padding-top: 3px;
line-height: 13px;
border-radius: 2px;
color: ${props => props.disabled ? "#8f969f" : "#1e395b"};
background: ${props => !props.$active ? "none" : props.$split
        ? "linear-gradient(#fbdca0, #fcd185 22px, #fdc25f 26px, #fed27d 37px, #c79337 37px, #c79337 38px, #fdc55d 38px, #fed47f)"
        : "linear-gradient(#fbdca0, #fcd185 22px, #fdc25f 26px, #fdc65f 60%, #fed47f)"};
box-shadow: ${props => props.$active ? "inset 0 0 0 1px #c7922f" : "none"};
`;

const IconBox = styled.span`
height: 32px;
margin-bottom: 3px;
display: flex;
align-items: center;
justify-content: center;
`;

const Drop = styled.span`
height: 12px;
display: flex;
align-items: center;
justify-content: center;
`;

const SmallStack = styled.div`
display: flex;
flex-direction: column;
align-items: flex-start;
padding-left: ${props => props.$gap}px;
`;

const SmallButton = styled.button`
height: 22px;
display: flex;
align-items: center;
gap: 3px;
color: ${props => props.disabled ? "#8f969f" : "#1e395b"};

svg + svg {
    margin-left: 2px;
}
`;

const ToolPads = styled.div`
display: flex;
flex-direction: column;
gap: 7px;
padding-top: 8px;
`;

const ToolPad = styled.div`
display: flex;
border: 1px solid #b3bfda;
border-radius: 2px;
background: linear-gradient(#f8faff, #e6edfa);
`;

const PadButton = styled.button`
width: 22px;
height: 20px;
display: flex;
align-items: center;
justify-content: center;

& + & {
    width: 23px;
    border-left: 1px solid #c3cde2;
}
`;

const Letter = styled.span`
font: bold 18px/20px "Liberation Serif", serif;
color: #1d3c6a;
`;

const Gallery = styled.div`
height: 60px;
margin: 3px 0 0 1px;
display: flex;
border: 1px solid #aebbd8;
background: #f6f9ff;
`;

const ShapeGrid = styled.div`
display: grid;
grid-template-columns: repeat(7, 20px);
grid-auto-rows: 19px;
height: 58px;
`;

const ShapeButton = styled.button`
width: 20px;
height: 20px;
`;

const GalleryScroll = styled.div`
width: 15px;
display: flex;
flex-direction: column;
background: #e4ebf8;
`;

const GalleryButton = styled.button`
flex: 1;
display: flex;
align-items: center;
justify-content: center;
`;

const ColorChip = styled.span`
width: ${props => props.$size}px;
height: ${props => props.$size}px;
border: 1px solid #848284;
box-shadow: inset 0 0 0 1px #d9dfec;
background: ${props => props.$color};
`;

const SwatchGrid = styled.div`
display: grid;
grid-template-columns: repeat(10, 20px);
grid-auto-rows: 20px;
gap: 2px;
padding: 1px 0 0 1px;
`;

const Swatch = styled.button`
border: 1px solid #848284;
box-shadow: ${props => props.$color ? "inset 0 0 0 1px #fff" : "none"};
background: ${props => props.$color || "transparent"};
`;

const Workspace = styled.main`
flex: 1;
min-height: 0;
padding: 5px;
background: linear-gradient(#c9d1e6, #d5dcee 35%, #e1e6f9 90%);
`;

const Paper = styled.div`
position: relative;
width: 1152px;
height: 648px;
background: #fff;
box-shadow: 7px 7px 2px -3px #b9c3dc;
`;

const Pasted = styled.div`
position: absolute;
left: 18px;
top: 48px;
height: 563px;
padding: 1px 1px 0 3px;
overflow: hidden;
background: #d6dcee;
`;

const Handle = styled.span`
position: absolute;
left: ${props => props.$x};
top: ${props => props.$y};
width: 5px;
height: 5px;
background: #fff;
border: 1px solid #555;
`;

const StatusBar = styled.footer`
height: 26px;
flex: none;
display: flex;
gap: 3px;
padding: 2px 0 1px;
background: #d6d3ce;
`;

const StatusCell = styled.div`
width: 153px;
flex: ${props => props.$wide ? "1" : "none"};
display: flex;
align-items: center;
gap: 4px;
padding-left: 2px;
border: 1px solid;
border-color: #848284 #fff #fff #848284;

&:first-child {
    width: 155px;
}
`;

const ZoomCell = styled.div`
width: 197px;
display: flex;
align-items: center;
justify-content: flex-end;
padding-right: 3px;
`;

const Floating = styled.aside`
position: absolute;
right: 10px;
bottom: 63px;
`;

const Inspector = styled.section`
width: 330px;
height: 589px;
display: flex;
flex-direction: column;
border: 1px solid #4d5258;
background: #d6dbee;
`;

const InspectorTitle = styled.div`
height: 20px;
flex: none;
display: flex;
align-items: center;
padding: 1px 1px 0 3px;
background: #4a6184;
color: #fff;

span {
    flex: 1;
    white-space: nowrap;
}
`;

const TitleButton = styled.button`
width: 17px;
height: 19px;
display: flex;
align-items: center;
justify-content: center;
font-weight: bold;
font-size: 12px;
color: #dfe5ee;
`;

const InspectorBar = styled.div`
height: 33px;
flex: none;
display: flex;
align-items: center;
`;

const Collapse = styled.button`
width: 24px;
display: flex;
justify-content: center;
`;

const ToolStrip = styled.div`
height: 29px;
display: flex;
align-items: center;
padding-left: 2px;
border-radius: 3px;
background: #ced7e8;
`;

const ToolButton = styled.button`
width: ${props => props.$width}px;
height: 26px;
display: flex;
align-items: center;
justify-content: center;
gap: 4px;
white-space: nowrap;
color: #1f2f44;

&:first-child {
    justify-content: flex-start;
}
`;

const ToolDivider = styled.span`
width: 1px;
height: 26px;
margin: 0 ${props => props.$gap}px;
background: #8494ab;
`;

const InspectorBody = styled.div`
flex: 1;
min-height: 0;
display: flex;
`;

const SideTab = styled.div`
width: 24px;
flex: none;
display: flex;
align-items: center;
justify-content: center;
writing-mode: vertical-rl;
transform: rotate(180deg);
background: #ced7e8;
color: #1f2f44;
`;

const Sheet = styled.div`
flex: 1;
min-width: 0;
display: flex;
flex-direction: column;
background: #fff;
`;

const SheetScroll = styled.div`
flex: 1;
overflow: hidden;
`;

const PropertyTable = styled.table`
width: 100%;
table-layout: fixed;
border-spacing: 0;
`;

const HeadCell = styled.th`
height: 25px;
padding: 0 0 0 5px;
text-align: left;
font-weight: normal;
border: solid #56585c;
border-width: 0 1px 1px 0;
box-shadow: inset -1px -1px #bdbdc0;

&:first-child {
    padding-left: 6px;
}

&:last-child {
    border-right: 0;
}
`;

const PropertyRow = styled.tr`
height: ${props => props.$tall ? 17 : 16}px;
`;

const Cell = styled.td`
padding: 2px 0 0;
vertical-align: top;
white-space: nowrap;
line-height: 14px;
`;

const GroupLabel = styled.div`
display: flex;
align-items: center;
gap: 9px;
padding-left: 6px;
`;

const NameCell = styled(Cell)`
padding-left: ${props => props.$selected ? 31 : 33}px;
${props => props.$selected && `
    padding-top: 1px;
    border: solid transparent;
    border-width: 1px 0 1px 2px;
    background: #cecede padding-box;
`}
`;

const ValueCell = styled(Cell)`
padding-left: 8px;
${props => props.$selected && `
    padding-top: 1px;
    border: solid transparent;
    border-width: 1px 0;
    background: #cecede padding-box;
`}
`;

const ScrollTrack = styled.div`
height: 16px;
flex: none;
display: flex;
background: #efebe7;

button:last-child {
    margin-left: auto;
}
`;

const ScrollButton = styled.button`
width: 16px;
display: flex;
align-items: center;
justify-content: center;
background: #d6d3ce;
box-shadow: ${bevel};
`;

const ScrollThumb = styled.div`
width: 169px;
background: #d6d3ce;
box-shadow: ${bevel};
`;

const InspectorFoot = styled.div`
height: 21px;
flex: none;
background: #ced6df;
`;

const Builder = styled.aside`
position: absolute;
right: 11px;
bottom: 1px;
width: 224px;
height: 61px;
border: 2px solid #94a2b6;
background: #ced7e9;
`;

const BuilderTitle = styled.div`
height: 19px;
display: flex;
align-items: center;
padding: 0 1px 0 7px;

span {
    flex: 1;
}
`;

const BuilderButton = styled.button`
width: 17px;
display: flex;
justify-content: center;
font-weight: bold;
font-size: 13px;
`;

const BuilderTools = styled.div`
display: flex;
align-items: center;
padding-left: 9px;
`;

const BuilderTool = styled.button`
width: 32px;
height: 32px;
margin: 0 1px;
display: flex;
align-items: center;
justify-content: center;
border: 1px solid ${props => props.$active ? "#e5c365" : "transparent"};
background: ${props => props.$active ? "#fff4be" : "none"};
`;
